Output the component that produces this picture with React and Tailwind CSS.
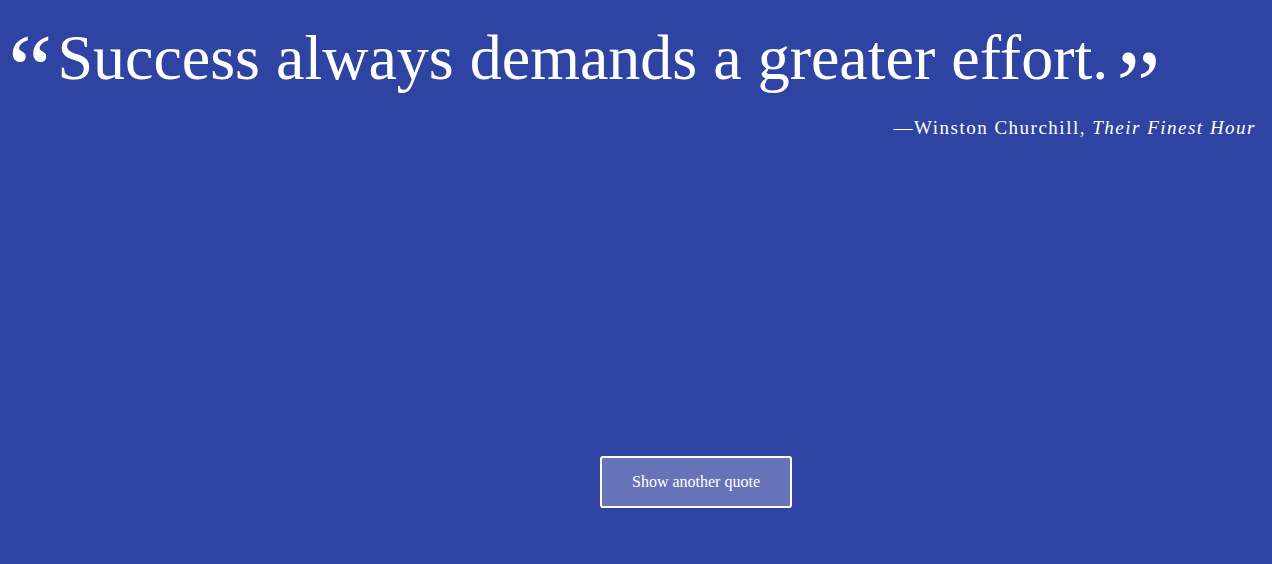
export default function App() {
  return (
    <div className="w-[1272px] h-[564px] bg-[#2f44a2] text-white flex flex-col" style={{ fontFamily: '"Liberation Serif", "Times New Roman", serif' }}>
      <div className="pt-[14px] pl-[8px] pr-[16px]">
        <p className="text-[64px] leading-[88px] whitespace-nowrap">
          <span className="text-[100px] align-top leading-[100px] inline-block translate-y-[6px] mr-[5px]">“</span>
          Success always demands a greater effort.
          <span className="text-[100px] leading-[0] inline-block translate-y-[39px] ml-[8px]">”</span>
        </p>
        <p className="text-right text-[19px] tracking-[1.5px] mt-0">
          —Winston Churchill, <em>Their Finest Hour</em>
        </p>
      </div>
      <div className="flex-1" />
      <div className="pl-[600px] pb-[56px]">
        <button className="w-[192px] h-[52px] bg-[#6773b9] border-2 border-white rounded-[3px] text-[16px] text-white">
          Show another quote
        </button>
      </div>
    </div>
  );
}
